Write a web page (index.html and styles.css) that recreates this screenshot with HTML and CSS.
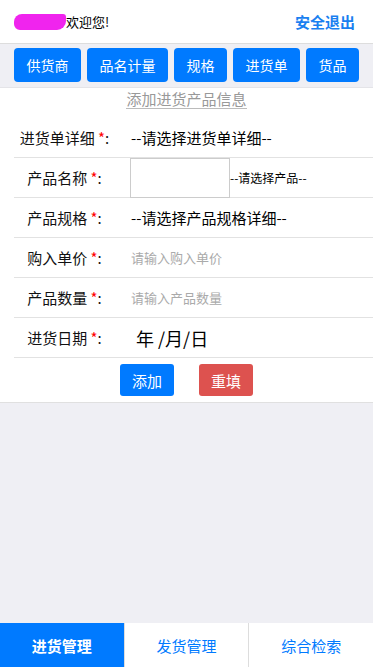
FILE: index.html
```html
<!DOCTYPE html>
<html lang="zh-CN">
<head>
    <meta charset="UTF-8">
    <meta name="viewport" content="width=device-width, initial-scale=1.0">
    <title>进货管理</title>
    <link rel="stylesheet" href="styles.css">
</head>
<body>
    <header class="top-bar">
        <div class="welcome"><span class="user-mask"></span>欢迎您!</div>
        <a class="logout" href="#">安全退出</a>
    </header>

    <nav class="nav-buttons">
        <button class="nav-btn">供货商</button>
        <button class="nav-btn">品名计量</button>
        <button class="nav-btn">规格</button>
        <button class="nav-btn">进货单</button>
        <button class="nav-btn">货品</button>
    </nav>

    <main class="content">
        <form class="form-panel">
            <div class="form-title"><span>添加进货产品信息</span></div>

            <div class="form-row">
                <label class="form-label">进货单详细 <i>*</i>:</label>
                <div class="form-value select-text">--请选择进货单详细--</div>
            </div>
            <div class="form-row">
                <label class="form-label">产品名称 <i>*</i>:</label>
                <div class="form-value">
                    <span class="empty-box"></span>
                    <span class="small-select">--请选择产品--</span>
                </div>
            </div>
            <div class="form-row">
                <label class="form-label">产品规格 <i>*</i>:</label>
                <div class="form-value select-text">--请选择产品规格详细--</div>
            </div>
            <div class="form-row">
                <label class="form-label">购入单价 <i>*</i>:</label>
                <div class="form-value placeholder">请输入购入单价</div>
            </div>
            <div class="form-row">
                <label class="form-label">产品数量 <i>*</i>:</label>
                <div class="form-value placeholder">请输入产品数量</div>
            </div>
            <div class="form-row">
                <label class="form-label">进货日期 <i>*</i>:</label>
                <div class="form-value date-text">年 /月/日</div>
            </div>

            <div class="form-actions">
                <button type="button" class="btn btn-blue">添加</button>
                <button type="reset" class="btn btn-red">重填</button>
            </div>
        </form>
    </main>

    <footer class="tab-bar">
        <a class="tab active" href="#">进货管理</a>
        <a class="tab" href="#">发货管理</a>
        <a class="tab" href="#">综合检索</a>
    </footer>
</body>
</html>
```

FILE: styles.css
```css
* {
    box-sizing: border-box;
}
body {
    margin: 0;
    height: 100vh;
    display: flex;
    flex-direction: column;
    background: #efeff4;
    font-family: "Noto Sans CJK SC", "Liberation Sans", sans-serif;
    color: #111;
}
.top-bar {
    height: 44px;
    flex-shrink: 0;
    display: flex;
    align-items: center;
    justify-content: space-between;
    padding: 0 18px 0 14px;
    background: #fff;
    border-bottom: 1px solid #ddd;
}
.welcome {
    display: flex;
    align-items: center;
    font-size: 13px;
    color: #000;
}
.user-mask {
    width: 52px;
    height: 16px;
    margin-top: 1px;
    background: #f024ee;
    border-radius: 8px 3px 9px 6px;
}
.logout {
    font-size: 15px;
    font-weight: bold;
    color: #1a7ff0;
    text-decoration: none;
}
.nav-buttons {
    display: flex;
    gap: 6px;
    padding: 4px 14px 5px;
    flex-shrink: 0;
}
.nav-btn {
    height: 34px;
    padding: 0 12.5px;
    border: none;
    border-radius: 4px;
    background: #007aff;
    color: #fff;
    font-family: inherit;
    font-size: 14px;
}
.content {
    flex: 1;
}
.form-panel {
    margin: 0;
    background: #fff;
    border-top: 1px solid #e4e4e8;
    border-bottom: 1px solid #e0e0e0;
}
.form-title {
    height: 30px;
    text-align: center;
    font-size: 15px;
    color: #999;
}
.form-title span {
    display: inline-block;
    line-height: 18px;
    border-bottom: 1px solid #bbb;
}
.form-row {
    display: flex;
    align-items: center;
    height: 40px;
    margin-left: 14px;
    border-bottom: 1px solid #e2e2e2;
}
.form-label {
    width: 101px;
    text-align: center;
    font-size: 15px;
    color: #111;
}
.form-label i {
    font-style: normal;
    color: #f00;
}
.form-value {
    margin-left: 15px;
    display: flex;
    align-items: center;
    height: 100%;
}
.select-text {
    margin-left: 16px;
    font-size: 15px;
    color: #000;
}
.empty-box {
    width: 100px;
    height: 40px;
    margin-top: 1px;
    border: 1px solid #ccc;
}
.small-select {
    font-size: 12px;
    color: #000;
}
.placeholder {
    margin-left: 16px;
    font-size: 13px;
    color: #aaa;
}
.date-text {
    margin-left: 21px;
    font-size: 18px;
    color: #000;
}
.form-actions {
    display: flex;
    justify-content: center;
    gap: 25px;
    padding: 6px 0 6px;
}
.btn {
    width: 54px;
    height: 32px;
    border: none;
    border-radius: 3px;
    color: #fff;
    font-family: inherit;
    font-size: 15px;
}
.btn-blue {
    background: #007aff;
}
.btn-red {
    background: #dd524f;
}
.tab-bar {
    height: 44px;
    flex-shrink: 0;
    display: flex;
    background: #fff;
}
.tab {
    flex: 1;
    display: flex;
    align-items: center;
    justify-content: center;
    font-size: 15px;
    color: #007aff;
    text-decoration: none;
    border-left: 1px solid #ddd;
}
.tab.active {
    border-left: none;
    background: #007aff;
    color: #fff;
    font-weight: bold;
}
```
